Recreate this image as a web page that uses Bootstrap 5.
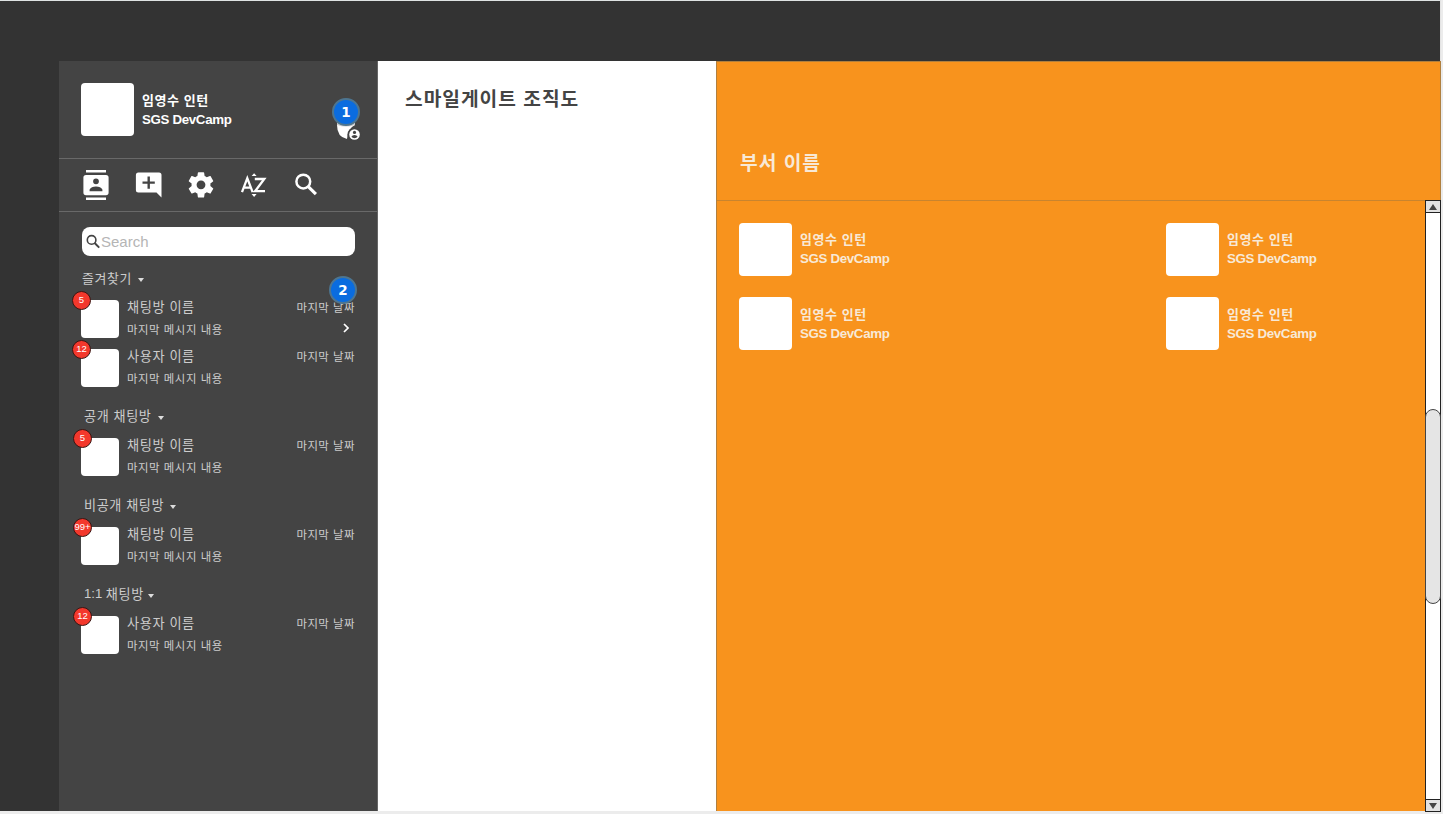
<!DOCTYPE html>
<html lang="ko">
<head>
<meta charset="utf-8">
<meta name="viewport" content="width=device-width, initial-scale=1">
<title>SGS Messenger</title>
<link href="https://cdn.jsdelivr.net/npm/bootstrap@5.3.0/dist/css/bootstrap.min.css" rel="stylesheet">
<style>
  body { background: #ececec; font-family: "Noto Sans CJK KR", sans-serif; height: 814px; overflow: hidden; line-height: 20px; }
  .app { width: 1441px; height: 812px; padding: 60px 0 0 59px; background: linear-gradient(#333, #333) top / 100% 810px no-repeat #ececec; border-top: 1px solid #dfe3e3; border-right: 1px solid #e4e4e4; box-sizing: border-box; }
  .panels { height: 750px; width: 1382px; }
  .sidebar { width: 319px; background: #444; border-right: 1px solid #666; color: #ccc; }
  .profile { height: 98px; padding: 22px 15px 0 22px; border-bottom: 1px solid #696969; }
  .toolbar { height: 53px; padding: 0 0 0 22px; gap: 22.5px; border-bottom: 1px solid #696969; }
  .toolbar svg { width: 30px; height: 32px; fill: #fff; }
  .photo { width: 53px; height: 53px; border-radius: 4px; background: #fff; flex: none; }
  .who { font-weight: 700; font-size: 13px; letter-spacing: .56px; line-height: 20px; padding: 7px 0 0 8px; white-space: nowrap; }
  .who .team { font: 700 13.3px/20px "Liberation Sans", sans-serif; letter-spacing: -.33px; }
  .cup { width: 32px; height: 44px; margin-top: 15px; }
  .marker { width: 28px; height: 28px; border-radius: 50%; background: #0a6cdf; border: 2px solid #4d7590; color: #fff; font: 900 13.5px/24px "DejaVu Sans", sans-serif; text-align: center; z-index: 2; }
  .marker-one { left: 2px; top: 0; }
  .marker-two { right: -2px; top: -20px; }
  .finder { margin: 15px 22px 0 23px; height: 29px; border-radius: 8px; padding-left: 4px; background: #fff; color: #b5b5b5; font: 15px/29px "Liberation Sans", sans-serif; }
  .finder svg { width: 15px; height: 15px; }
  .groups { padding: 11px 22px 0 22px; }
  .group { margin-bottom: 16px; }
  .group-title { height: 22px; font-size: 13.1px; letter-spacing: .6px; line-height: 22px; margin: 0 0 7px 3px; }
  .group:first-child .group-title { margin-left: 1px; font-size: 12.9px; }
  .latin { font-family: "Liberation Sans", sans-serif; letter-spacing: 0; }
  .caret { display: inline-block; border: 3px solid transparent; border-top: 4px solid #ddd; border-bottom: 0; margin: 3px 0 0 6px; }
  .latin ~ .caret { margin-left: 4px; }
  .chat { height: 44px; line-height: 22px; }
  .chat + .chat { margin-top: 5px; }
  .thumb { width: 38px; height: 38px; border-radius: 4px; background: #fff; margin: 1px 8px 0 0; }
  .unread { left: -9px; top: -9px; width: 19px; height: 19px; border-radius: 50%; background: #f3382c; border: 1px solid #3b1512; color: #fff; font: 9.5px/16px "Liberation Sans", sans-serif; text-align: center; }
  .group + .group .unread { left: -8px; }
  .room { font-size: 13.2px; letter-spacing: .58px; margin-top: -1px; }
  .preview { font-size: 11.4px; letter-spacing: .55px; }
  .date { font-size: 11.4px; letter-spacing: .5px; }
  .arrow { width: 6px; height: 10px; margin: 5px 6px 0 0; }
  .orgchart { width: 338px; background: #fff; padding: 25px 0 0 27px; }
  .heading { font-size: 19.2px; letter-spacing: 1px; line-height: 24px; font-weight: 700; color: #444; margin: 0; }
  .dept { width: 725px; background: #f8931d; border: 1px solid #b0803f; border-bottom: 0; color: #f8e9d6; }
  .dept-head { height: 139px; border-bottom: 1px solid #c9842e; padding: 88px 0 0 23px; }
  .dept-head .heading { color: #f8e9d6; }
  .members { width: 708px; padding: 22px 0 0 22px; }
  .members .photo { margin-top: -.5px; }
  .members .who { padding-top: 6px; }
  .member-row { gap: 278px; margin-bottom: 22px; }
  .member { width: 149px; }
  .scroller { width: 16px; background: #fff; border: 1px solid #222; margin: -1px -1px -1px 0; }
  .step { height: 12px; background: #e2e2e2; border-bottom: 1px solid #222; }
  .step:last-child { border-top: 1px solid #222; border-bottom: 0; }
  .step svg { width: 8px; height: 6px; fill: #444; }
  .grip { height: 195px; border: 1px solid #444; border-radius: 8px; background: #e5e5e5; margin: 196px -1px 0; }
</style>
</head>
<body>
<main class="app">
  <div class="panels d-flex">
    <aside class="sidebar d-flex flex-column flex-shrink-0">
      <header class="profile d-flex flex-shrink-0 text-white">
        <div class="photo"></div>
        <div class="who">임영수 인턴<div class="team">SGS DevCamp</div></div>
        <div class="cup position-relative ms-auto">
          <svg width="32" height="44" viewBox="0 0 32 44">
            <path d="M7 22H25V27A12 16 0 0 0 17 41Q7 39 7 27Z" fill="#fff"/>
            <path d="M7 22H25V27Q16 30 7 27Z" fill="#ccc"/>
            <circle cx="24.5" cy="36.5" r="7" fill="#444"/>
            <circle cx="24.5" cy="36.5" r="5.3" fill="#fff"/>
            <circle cx="24.5" cy="34.4" r="1.6" fill="#444"/>
            <path d="M21.4 38.8Q22.2 37 24.5 37T27.6 38.8Q26.5 40.2 24.5 40.2T21.4 38.8Z" fill="#444"/>
          </svg>
          <span class="marker marker-one position-absolute">1</span>
        </div>
      </header>

      <nav class="toolbar d-flex align-items-center flex-shrink-0">
        <svg viewBox="0 0 30 32"><path fill-rule="evenodd" d="M5 1H25V3.4H5ZM5 28.6H25V31H5ZM5 6H25A2.6 2.6 0 0 1 27.6 8.6V23.6A2.6 2.6 0 0 1 25 26.2H5A2.6 2.6 0 0 1 2.4 23.6V8.6A2.6 2.6 0 0 1 5 6ZM15 9.4A2.9 2.9 0 1 0 15 15.2A2.9 2.9 0 1 0 15 9.4ZM8.6 22.3H21.4V20.6Q19.8 17.4 15 17.4T8.6 20.6Z"/></svg>
        <svg viewBox="0 0 30 32"><path fill-rule="evenodd" d="M4.4 3.5H25A2.5 2.5 0 0 1 27.5 6V28.5L22.5 23.6H4.4A2.5 2.5 0 0 1 1.9 21.1V6A2.5 2.5 0 0 1 4.4 3.5ZM13.5 7.5V12.4H8.5V14.8H13.5V19.7H15.9V14.8H20.8V12.4H15.9V7.5Z"/></svg>
        <svg viewBox="-1.1 -1.8 26.2 27.9"><path d="M19.43 12.98c.04-.32.07-.64.07-.98s-.03-.66-.07-.98l2.11-1.65c.19-.15.24-.42.12-.64l-2-3.46c-.12-.22-.39-.3-.61-.22l-2.49 1c-.52-.4-1.08-.73-1.69-.98l-.38-2.65C14.46 2.18 14.25 2 14 2h-4c-.25 0-.46.18-.49.42l-.38 2.65c-.61.25-1.17.59-1.69.98l-2.49-1c-.23-.09-.49 0-.61.22l-2 3.46c-.13.22-.07.49.12.64l2.11 1.65c-.04.32-.07.65-.07.98s.03.66.07.98l-2.11 1.65c-.19.15-.24.42-.12.64l2 3.46c.12.22.39.3.61.22l2.49-1c.52.4 1.08.73 1.69.98l.38 2.65c.03.24.24.42.49.42h4c.25 0 .46-.18.49-.42l.38-2.65c.61-.25 1.17-.59 1.69-.98l2.49 1c.23.09.49 0 .61-.22l2-3.46c.12-.22.07-.49-.12-.64zM12 15.5a3.5 3.5 0 1 1 0-7 3.5 3.5 0 0 1 0 7z" transform="translate(-1.2 -1.2) scale(1.1)"/></svg>
        <svg viewBox="0 0 30 32"><path d="M12.6 7L15.1 4.2L17.6 7ZM12.6 25.1L15.1 27.9L17.6 25.1Z"/><path d="M3 23.2L8.3 9.2L13.6 23.2M5 18.7H11.7M15.8 10H25.3L16.1 22.2H26" fill="none" stroke="#fff" stroke-width="2.3"/></svg>
        <svg viewBox="0 0 30 32"><circle cx="12.3" cy="12.6" r="6.9" fill="none" stroke="#fff" stroke-width="2.5"/><path d="M17 17.4L24.9 25.2" stroke="#fff" stroke-width="3.1"/></svg>
      </nav>

      <div class="finder d-flex align-items-center flex-shrink-0">
        <svg viewBox="0 0 15 15" fill="none" stroke="#444"><circle cx="5.6" cy="5.9" r="4.3" stroke-width="1.6"/><path d="M8.4 8.8L13.2 13.6" stroke-width="2"/></svg>
        <span>Search</span>
      </div>

      <div class="groups">
        <section class="group">
          <div class="group-title d-flex align-items-center">즐겨찾기<i class="caret"></i></div>
          <div class="chat d-flex align-items-center">
            <div class="thumb position-relative"><span class="unread position-absolute">5</span></div>
            <div><div class="room">채팅방 이름</div><div class="preview">마지막 메시지 내용</div></div>
            <div class="ms-auto align-self-start position-relative d-flex flex-column align-items-end">
              <span class="date">마지막 날짜</span>
              <svg class="arrow" viewBox="0 0 6 10"><path d="M1 1L5 5L1 9" fill="none" stroke="#fff" stroke-width="1.7"/></svg>
              <span class="marker marker-two position-absolute">2</span>
            </div>
          </div>
          <div class="chat d-flex align-items-center">
            <div class="thumb position-relative"><span class="unread position-absolute">12</span></div>
            <div><div class="room">사용자 이름</div><div class="preview">마지막 메시지 내용</div></div>
            <span class="date ms-auto align-self-start">마지막 날짜</span>
          </div>
        </section>
        <section class="group">
          <div class="group-title d-flex align-items-center">공개 채팅방<i class="caret"></i></div>
          <div class="chat d-flex align-items-center">
            <div class="thumb position-relative"><span class="unread position-absolute">5</span></div>
            <div><div class="room">채팅방 이름</div><div class="preview">마지막 메시지 내용</div></div>
            <span class="date ms-auto align-self-start">마지막 날짜</span>
          </div>
        </section>
        <section class="group">
          <div class="group-title d-flex align-items-center">비공개 채팅방<i class="caret"></i></div>
          <div class="chat d-flex align-items-center">
            <div class="thumb position-relative"><span class="unread position-absolute">99+</span></div>
            <div><div class="room">채팅방 이름</div><div class="preview">마지막 메시지 내용</div></div>
            <span class="date ms-auto align-self-start">마지막 날짜</span>
          </div>
        </section>
        <section class="group">
          <div class="group-title d-flex align-items-center"><span class="latin">1:1&nbsp;</span>채팅방<i class="caret"></i></div>
          <div class="chat d-flex align-items-center">
            <div class="thumb position-relative"><span class="unread position-absolute">12</span></div>
            <div><div class="room">사용자 이름</div><div class="preview">마지막 메시지 내용</div></div>
            <span class="date ms-auto align-self-start">마지막 날짜</span>
          </div>
        </section>
      </div>
    </aside>

    <section class="orgchart flex-shrink-0">
      <h1 class="heading">스마일게이트 조직도</h1>
    </section>

    <section class="dept d-flex flex-column flex-shrink-0">
      <header class="dept-head flex-shrink-0"><h2 class="heading">부서 이름</h2></header>
      <div class="d-flex flex-grow-1">
        <div class="members flex-shrink-0">
          <div class="member-row d-flex">
            <div class="member d-flex"><div class="photo"></div><div class="who">임영수 인턴<div class="team">SGS DevCamp</div></div></div>
            <div class="member d-flex"><div class="photo"></div><div class="who">임영수 인턴<div class="team">SGS DevCamp</div></div></div>
          </div>
          <div class="member-row d-flex">
            <div class="member d-flex"><div class="photo"></div><div class="who">임영수 인턴<div class="team">SGS DevCamp</div></div></div>
            <div class="member d-flex"><div class="photo"></div><div class="who">임영수 인턴<div class="team">SGS DevCamp</div></div></div>
          </div>
        </div>
        <div class="scroller d-flex flex-column flex-shrink-0">
          <div class="step d-flex align-items-center justify-content-center"><svg viewBox="0 0 8 6"><path d="M4 0L8 6H0Z"/></svg></div>
          <div class="grip"></div>
          <div class="step d-flex align-items-center justify-content-center mt-auto"><svg viewBox="0 0 8 6"><path d="M4 6L8 0H0Z"/></svg></div>
        </div>
      </div>
    </section>
  </div>
</main>
<script src="https://cdn.jsdelivr.net/npm/bootstrap@5.3.0/dist/js/bootstrap.bundle.min.js"></script>
</body>
</html>
